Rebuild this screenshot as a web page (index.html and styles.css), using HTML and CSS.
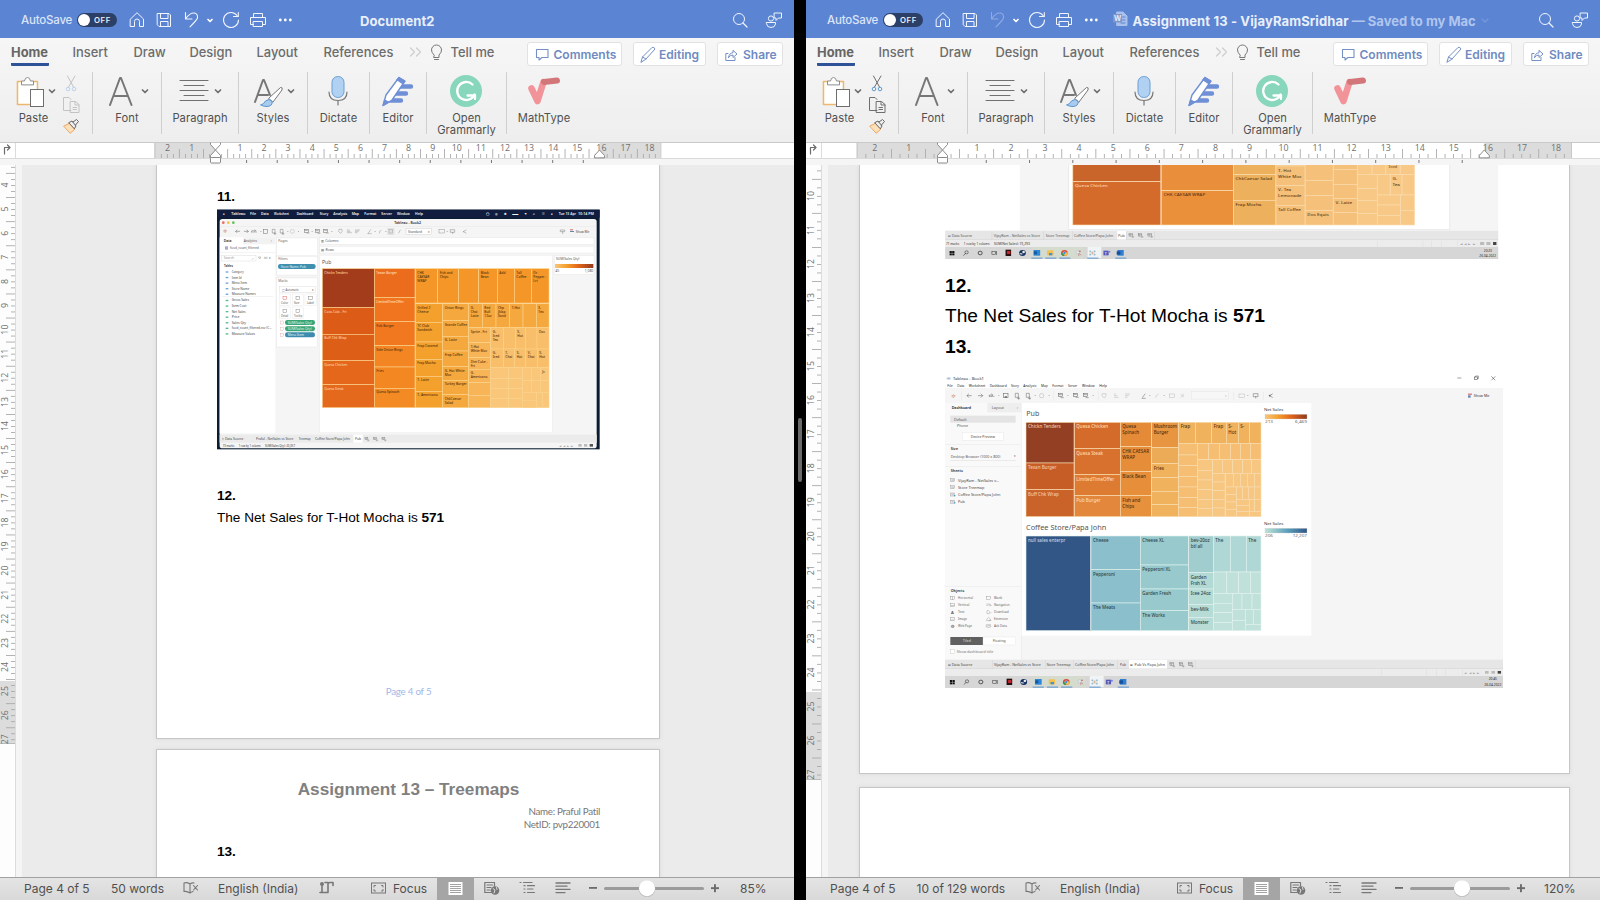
FILE: index.html
```html
<!DOCTYPE html>
<html lang="en">
<head>
<meta charset="utf-8">
<title>Word</title>
<link rel="stylesheet" href="styles.css">
</head>
<body>
<div class="desktop">
  <section class="window" id="left"></section>
  <div class="split"><span class="grip"></span></div>
  <section class="window" id="right"></section>
</div>
<script src="app.js"></script>
</body>
</html>
```

FILE: styles.css
```css
* { box-sizing: border-box; }
body { margin: 0; width: 1600px; height: 900px; overflow: hidden; background: #000; font-family: Inter, "Liberation Sans", sans-serif; }
svg { display: block; flex: none; overflow: visible; }
.desktop { display: flex; height: 900px; }
.window { width: 794px; height: 900px; display: flex; flex-direction: column; background: #f4f4f4; overflow: hidden; }
.split { width: 12px; display: flex; align-items: center; justify-content: center; background: #000; }
.grip { width: 4px; height: 64px; border-radius: 2px; background: #6a6a6a; }

.titlebar { height: 38px; flex: none; display: flex; align-items: center; background: #5b84d3; color: #e9effb; white-space: nowrap; }
.autosave { flex: none; width: 77px; padding-left: 21px; padding-top: 2px; font-size: 11.5px; font-weight: 500; letter-spacing: -.2px; color: #dbe5f8; }
.toggle { flex: none; width: 40px; height: 14px; margin-top: 2px; border-radius: 7px; background: #2c3f66; display: flex; align-items: center; gap: 4px; padding-left: 1px; font-size: 7.8px; font-weight: 600; letter-spacing: .6px; }
.knob { width: 12px; height: 12px; border-radius: 50%; background: #fff; }
.doc-title { flex: none; padding-top: 3px; font-size: 13px; font-weight: 700; display: flex; align-items: center; }
.left-title { width: 431px; padding-left: 58px; letter-spacing: .1px; }
.right-title { width: 411px; padding-left: 4.5px; }
.name { letter-spacing: .13px; }
.saved { color: #b1c6ee; font-weight: 700; white-space: pre; }
.title-gap { width: 5px; flex: none; }

.ribbon { height: 105px; flex: none; background: linear-gradient(#f6f6f6, #eeeeee); border-bottom: 1px solid #c9c9c9; }
.tabs { height: 34px; display: flex; font-size: 12.9px; font-weight: 500; color: #6c6c6c; white-space: nowrap; padding-left: 11px; }
.tab { flex: none; height: 28px; padding-top: 6.5px; line-height: 16px; }
.tab.active { font-weight: 700; border-bottom: 3px solid #2f5299; border-radius: 0 0 1px 1px; color: #666; }
.action { flex: none; height: 24px; margin-top: 4px; padding-top: 1px; border: 1px solid #e2e2e2; border-radius: 3px; background: #fff; color: #6f8bbf; display: flex; align-items: center; font-size: 12px; font-weight: 600; }
.groups { display: flex; height: 70px; }
.group { display: flex; border-right: 1px solid #cfcfcf; height: 62px; }
.group.last { border: 0; }
.stack { width: 100%; }
.label { font-size: 11.2px; line-height: 12px; color: #505050; text-align: center; margin-top: -.5px; letter-spacing: .05px; }
.label.paste { width: 67px; }

.hruler { height: 16px; flex: none; background: #fff; display: flex; border-bottom: 1px solid #dadada; }
.below-ruler { height: 6px; flex: none; background: #f5f5f5; display: flex; }
.body { flex: 1; min-height: 0; display: flex; overflow: hidden; }
.vruler { width: 16px; flex: none; background: #fdfdfd; border-right: 1px solid #dcdcdc; }
.gutter { width: 6px; flex: none; background: #f5f5f5; }
.canvas { flex: 1; background: #ebebeb; overflow: hidden; }
.page { background: #fff; border: 1px solid #c6c6c6; box-shadow: 0 0 4px #d8d8d8; }
.page.clipped { border-top: 0; }
.left-doc .page { width: 504px; margin-left: 134px; }
.left-doc .first { height: 574px; padding: 22px 59px 0 60px; }
.left-doc .second { height: 140px; margin-top: 10px; padding: 27px 59px 0 60px; }
.right-doc .page { width: 711px; margin-left: 31px; }
.right-doc .first { height: 609px; padding: 0 0 0 85px; }
.right-doc .second { height: 120px; margin-top: 13px; }
.line { font-family: "Liberation Sans", Arial, sans-serif; color: #000; white-space: nowrap; }
.left-doc .line { font-size: 13.6px; line-height: 20px; letter-spacing: 0; }
.right-doc .line { font-size: 19.2px; line-height: 30px; letter-spacing: -.02px; }
.footer { font-family: Lato, sans-serif; font-size: 9.8px; line-height: 20px; text-align: center; color: #a3b8e6; margin-top: 153px; letter-spacing: -.25px; }
.doc-head { font-family: "Liberation Sans", Arial, sans-serif; font-weight: 700; font-size: 17.2px; line-height: 24px; text-align: center; color: #808080; white-space: nowrap; }
.byline { font-family: Lato, sans-serif; font-size: 9.8px; line-height: 13px; text-align: right; color: #777; margin: 4px 0 11px; letter-spacing: -.3px; }

.status { height: 23px; flex: none; border-top: 1px solid #a1a1a1; background: linear-gradient(#e4e4e4, #d9d9d9); display: flex; font-size: 12px; line-height: 22px; color: #505050; white-space: nowrap; }
```

FILE: app.js
```
const R = (x, y, w, h, f, extra = '') => `<rect x="${x}" y="${y}" width="${w}" height="${h}" fill="${f}" ${extra}/>`;
const T = (x, y, s, text, w, f = '#555', extra = '') =>
  `<text x="${x}" y="${y}" font-size="${s}" fill="${f}" ${w ? `textLength="${w}" lengthAdjust="spacingAndGlyphs"` : ''} ${extra}>${text}</text>`;
const P = (d, s = '#6e6e6e', w = 1, f = 'none', extra = '') =>
  `<path d="${d}" stroke="${s}" stroke-width="${w}" fill="${f}" stroke-linejoin="round" stroke-linecap="round" ${extra}/>`;
const svg = (x, y, w, h, inner, extra = '') => `<svg width="${w}" height="${h}" viewBox="${x} ${y} ${w} ${h}" ${extra}>${inner}</svg>`;

/* ---------- title bar ---------- */
function titlebar(right) {
  const c = '#f1f5fd';
  const undo = right ? '#8fabe2' : c;
  const icons = svg(117, 0, 185, 38,
    P('M130.5 19L137 12.7L143.5 19V26.5H139.5V21.5Q139.5 19 137 19Q134.5 19 134.5 21.5V26.5H130.5Z', c) +
    P('M157.5 13.5H169L170.5 15V26.5H159L157.5 25ZM160.5 13.5V18.5H168V13.5M160.5 26.5V21.5H168V26.5', c) +
    P('M185.5 12.5V19H192M185.8 18.5Q190 12.5 194.5 13Q198 14 197.5 18Q197 20 190 26.8', undo, 1.1) +
    P('M208 19.5L210 21.5L212 19.5', '#fff', 1.7) +
    P('M237 15.5A7.5 7.5 0 1 0 238.5 20M238.3 12.5V16.5H233.5', c, 1.1) +
    P('M253.5 17.5V13.5H262.5V17.5M253.5 24.5H250.5V17.5H265.5V24.5H262.5M253.5 21.5H262.5V26.5H253.5Z', c) +
    [280.3, 285.3, 290.3].map(x => `<circle cx="${x}" cy="20" r="1.4" fill="#fff"/>`).join(''));
  const wordIcon = svg(313, 12, 15, 16, P('M317 13H323L327 17V26.5H317Z', '#a9c0ec', 1, '#a9c0ec') + P('M322.500 18H325M322.500 21H325M321 24H325', '#5b84d3') + R(313, 15, 9, 8.5, '#7f96c8') + T(314, 22, 7, 'W', 0, '#e2eafa', 'font-weight="700"'));
  const title = right
    ? `<div class="title-gap"></div>${wordIcon}<div class="doc-title right-title"><span class="name">Assignment 13 - VijayRamSridhar</span><span class="saved"> — Saved to my Mac</span>${svg(0, 0, 18, 6, P('M6 1L9 4L12 1', '#7697db', 1.3))}</div>`
    : `<div class="doc-title left-title">Document2</div>`;
  const tail = svg(733, 0, 61, 38,
    `<circle cx="739" cy="19" r="5.5" fill="none" stroke="${c}"/>` + P('M743 23L747 27', c, 1.2) +
    `<circle cx="771" cy="18.5" r="2.6" fill="none" stroke="${c}"/>` +
    P('M766.5 22.5H775.5V24Q775 27.5 771 27.5Q767 27.5 766.5 24ZM774.5 13H781.5V18H778.5L776 20.5V18H774.5Z', c));
  return `<div class="titlebar"><div class="autosave">AutoSave</div><div class="toggle"><span class="knob"></span>OFF</div>${icons}${title}${tail}</div>`;
}

/* ---------- ribbon ---------- */
function ribbon(right) {
  const tabs = [['Home', 37.5, 24], ['Insert', 35, 26], ['Draw', 31, 25], ['Design', 42, 25], ['Layout', 41, 26], ['References', 70, 16]]
    .map(([t, w, gap], i) => `<div class="tab ${i ? '' : 'active'}" style="width:${w}px;margin-right:${gap}px">${t}</div>`).join('');
  const bulb = svg(409.5, 38, 41, 28, P('M410 48L414 52L410 56M416 48L420 52L416 56', '#cdcdcd', 1.2) +
    P('M433.5 55Q431 52.5 431 50A5 5 0 0 1 441 50Q441 52.5 438.5 55V57.5H433.5ZM434 59.5H438', '#777'));
  const b = '#7590c4';
  const comments = svg(0, 0, 13, 13, P('M.5 1.5H12V9.5H6L3 12V9.5H.5Z', b, 1.1));
  const editing = svg(0, 0, 16, 17, P('M1 16L2.5 11L12 1.5Q14 .5 15 3L6 13ZM2.5 11L6 13', b));
  const share = svg(0, 0, 13, 12, P('M3 4.5H.8V11.5H10V8.5M3.5 8.5Q4 4 8 3.8V1.3L12 5L8 8.5V6Q5 6 3.5 8.5Z', b));
  const chev = x => P(`M${x - 2.5} 90L${x} 92.5L${x + 2.5} 90`, '#6e6e6e', 1.7);
  const group = (x, w, icon, label) => `<div class="group" style="width:${w}px"><div class="stack">${svg(x, 72, w - 1, 40, icon)}<div class="label">${label}</div></div></div>`;
  const mute = right ? '#6e6e6e' : '#c3c3c3';
  const muteBlue = right ? '#5d9ad3' : '#b9d4ee';
  const paste = P('M22 81.5H17.5V104.5H30', '#edb672', 1.6, '#fdeec9') + R(18.5, 82.5, 18, 21, '#fff') + P('M33 81.5H37.5V89', '#edb672', 1.4) +
    P('M21.5 84.5V81H24.5Q25 77.5 27.5 77.5Q30 77.5 30.5 81H33.5V84.5Z', '#8d8d8d', 1, '#fff') +
    R(30.5, 89.5, 13, 17, '#fff', 'stroke="#6e6e6e"') + chev(52);
  const tools = P('M67.5 76L73.5 87M75 76L68.5 87', mute) + `<circle cx="68" cy="89" r="1.8" fill="none" stroke="${muteBlue}"/><circle cx="74" cy="89" r="1.8" fill="none" stroke="${muteBlue}"/>` +
    P('M71 110.5H63.5V97.5H69L71 99.5', mute) + P('M70.5 101.5H75.5L79 104.5V112.5H70.5ZM75 101.5V105H79M73 107.5H76.5M73 109.5H76.5', mute) +
    P('M64 126L70 123L75 129L70.5 133Z', '#eba761', 1, '#fde0b8') + P('M69 122.5L72 121L76 126L74.5 128.5ZM73 122L76.5 119.5L78.5 121.5L75.5 125', '#666', 1, '#eee');
  const font = P('M110 105L120 78H121L131.5 105M113.5 96H128', '#767676', 2) + chev(145);
  const para = P('M180 80.5H208M184 85.5H204M180 90.5H208M184 95.5H204M180 100.5H208', '#707070', 1.1, 'none', 'stroke-linecap="butt"') + chev(218);
  const styles = P('M255 102L263 80H264L270 95M258 95H268', '#767676', 2) + P('M269 98L280.5 87.5Q283 87 282 90L273 102Z', '#777', 1, '#fff') + P('M261 105Q264 104 265.5 101Q269 98 272 101Q273 106 267 106.5Q263 106.5 261 105Z', '#5b93cf', 1, '#a9ccee') + chev(291);
  const mic = R(332, 76.5, 12, 21, '#b0d1f1', 'rx="5.8" stroke="#6b9fd6"') + P('M329 92Q329 100.5 338 100.5Q347 100.5 347 92M338 101V105', '#777', 1.2);
  const editor = P('M400 86.5H411M396 93.500H406M390 100.500H401', '#6f8fd6', 4.4) + P('M383 105.5L386 95L399 77.500L405 81L392 100Z', '#6f8fd6', 1.4, '#fff') + P('M399 77.5L405 81L403 84L397 80Z', '#6f8fd6', 1, '#6f8fd6') + P('M383 105.5L384.5 100L389 102Z', '#6f8fd6', 1, '#6f8fd6');
  const gram = '<circle cx="466" cy="91" r="16" fill="#88d6bc"/>' + P('M472.5 84.5A9 9 0 1 0 474.5 94.5M474.5 95.5H467.5M475 95V99', '#fff', 2.3, 'none', 'stroke-linecap="butt"');
  const math = P('M531.5 88.5L537.5 101L543.5 82', '#f19398', 6.5) + P('M544 82L557 80.5', '#d27679', 6);
  return `<div class="ribbon"><div class="tabs">${tabs}${bulb}<div class="tab" style="width:76.5px">Tell me</div>
    <div class="action" style="width:95px;padding-left:7.5px;gap:5px;margin-right:11px">${comments}Comments</div>
    <div class="action" style="width:73px;padding-left:6px;gap:3px;margin-right:11px">${editing}Editing</div>
    <div class="action" style="width:66px;padding-left:7px;gap:5px">${share}Share</div></div>
    <div class="groups"><div class="group" style="width:93px"><div style="width:60px">${svg(0, 72, 60, 40, paste)}<div class="label paste">Paste</div></div>${svg(60, 72, 32, 62, tools)}</div>
    ${group(93, 69, font, 'Font')}${group(162, 77, para, 'Paragraph')}${group(239, 69, styles, 'Styles')}${group(308, 62, mic, 'Dictate')}${group(370, 57, editor, 'Editor')}${group(427, 80, gram, 'Open<br>Grammarly')}
    <div class="group last" style="width:74px"><div class="stack">${svg(507, 72, 73, 40, math)}<div class="label">MathType</div></div></div></div></div>`;
}

/* ---------- rulers ---------- */
function hruler(o) {
  let s = R(o.start, 143, o.zero - o.start, 15, '#dcdcdc') + R(o.right, 143, o.end - o.right, 15, '#dcdcdc') + R(15, 143, 1, 15, '#dcdcdc') +
    P('M4.5 154V147.5H9.5M7.5 145L10 147.5L7.5 150', '#6b6b6b', 1.2) + R(o.start, 143, .8, 15, '#bbb') + R(o.end, 143, .8, 15, '#bbb');
  for (let q = -10; q < 76; q++) {
    const x = o.zero + q * o.cm / 4;
    if (x < o.start + 2 || x > o.end - 2) continue;
    const half = Math.abs(q % 4) === 2;
    if (q) s += R((x - .4).toFixed(1), half ? 149 : 154, .9, half ? 9 : 4, '#ababab');
    if (q % 4 === 0 && q) s += T((x + .3).toFixed(1), 151, 8.8, Math.abs(q / 4), 0, '#6f6f6f', 'text-anchor="middle"');
  }
  s += P(`M${o.zero - 5} 143V144.5L${o.zero} 150L${o.zero + 5} 144.5V143M${o.zero - 5} 157.5V155.5L${o.zero} 150L${o.zero + 5} 155.5V157.5Z`, '#8b8b8b', 1, '#fff') +
    R(o.zero - 5, 157.5, 10, 5.5, '#fff', 'stroke="#8b8b8b" rx="1"') +
    P(`M${o.right - 5} 157.5V155.5L${o.right} 150L${o.right + 5} 155.5V157.5Z`, '#8b8b8b', 1, '#fff');
  for (let k = 1; k < 13 && k * o.cm * 1.27 < o.right - o.zero - 5; k++) s += R(o.zero + k * o.cm * 1.27, 160, 1, 3, '#777');
  return `<div class="hruler">${svg(0, 143, 794, 15, s, 'font-family="Open Sans" style="position:relative;z-index:1"')}</div><div class="below-ruler"></div>`;
}
function vruler(o) {
  let s = R(0, o.from, 15, o.to - o.from, '#dcdcdc') + R(0, o.to, 15, 1, '#bbb');
  for (let q = 0; q < 112; q++) {
    const y = o.zero + q * o.cm / 4;
    if (y < 166 || y > o.to - 1) continue;
    const half = q % 4 === 2;
    s += R(half ? 6 : 11, y.toFixed(1), half ? 9 : 4, .9, '#ababab');
    if (q % 4 === 0) s += T(0, 0, 8.8, q / 4, 0, '#6f6f6f', `text-anchor="middle" transform="translate(8 ${y.toFixed(1)}) rotate(-90)"`);
  }
  return `<div class="vruler">${svg(0, 165, 15, 712, s, 'font-family="Open Sans"')}</div>`;
}

/* ---------- status bar ---------- */
function status(o) {
  const g = '#777';
  const word = (w, t) => `<div style="width:${w}px">${t}</div>`;
  const book = svg(0, 878, 15, 22, P('M7 884Q4 882 1 883V891.5Q4 891 7 893Q8 892 10 891.5M7 884V893M7 884Q9 882.5 11 883M10.5 885.5L14.5 890M14.5 885.5L10.5 890', g, 1.1));
  const track = svg(0, 878, 15, 22, '<circle cx="3" cy="884" r="2" fill="#777"/>' + P('M3 886V892.5H9V884Q9 882.5 11 882.5H14V885.5M1 892.5H6M9 882.5H6', g, 1.6));
  const focus = svg(0, 878, 15, 22, R(.5, 883, 14, 10, 'none', `stroke="${g}"`) + P('M3 887V885.5H4.5M10.5 885.5H12V887M12 889.5V891H10.5M4.5 891H3V889.5', g));
  const lay = svg(0, 878, 37, 22, R(0, 878, 37, 22, '#a5a5a5') + R(11.5, 882, 14, 13, '#fff') + [884, 886, 888, 890, 892].map(y => R(13, y, 11, .9, '#999')).join(''));
  const web = svg(0, 878, 16, 22, P('M10.5 886V882.5H.8V892.5H7M3 885H8.5M3 887.5H7M3 890H6', g, 1.2) + '<circle cx="11" cy="890.5" r="4.3" fill="#777"/>' + P('M9 888.5L11 890L10 893M12.5 887.5L13 889.5', '#ddd', 1));
  const out = svg(0, 878, 15, 22, P('M0 882.5H1M3.5 882.5H12M4 885.7H5M7.5 885.7H14.5M4 889H5M7.5 889H13M4 892.5H5M7.5 892.5H14.5', g, 1.2, 'none', 'stroke-linecap="butt"'));
  const draft = svg(0, 878, 14, 22, P('M0 883H14M0 886.2H11M0 889.4H14M0 892.6H9', g, 1.3, 'none', 'stroke-linecap="butt"'));
  const zoom = svg(589, 878, 151, 22, R(589, 887, 8, 1.8, '#6b6b6b') + R(604, 887, 100, 3, '#9b9b9b', 'rx="1.5"') +
    `<circle cx="${o.knob}" cy="888.8" r="8.3" fill="#bbb"/><circle cx="${o.knob}" cy="888.2" r="8" fill="#fff"/>` + R(711, 887.2, 8, 1.9, '#6b6b6b') + R(714, 884.2, 1.9, 8, '#6b6b6b'));
  const sp = w => `<div style="width:${w}px;flex:none"></div>`;
  return `<div class="status">${sp(24)}${word(o.w1, 'Page 4 of 5')}${word(o.w2, o.words)}${book}${sp(20)}${word(o.w3, 'English (India)')}${o.track ? track : ''}${o.track ? sp(37) : ''}${focus}${sp(7)}${word(44, 'Focus')}${lay}${sp(10)}${web}${sp(20)}${out}${sp(21)}${draft}${sp(19)}${zoom}<div style="margin-left:${o.zx}px">${o.pct}</div></div>`;
}

/* ---------- treemap cells: [x0, y0, x1, y1, fill, label lines, label colour] ---------- */
const cells = (list, gap, ink, size, step) => list.map(([a, b, c, d, f, t, tc]) =>
  R(a - 1, b - 1, c - a + 2, d - b + 2, f, `stroke="${gap}" stroke-width="1.8"`) +
  (t ? t.split('|').map((l, i) => T(a + 5, b + size + 4 + i * step, size, l, 0, tc || ink, 'font-weight="500"')).join('') : '')).join('');
const column = (x0, x1, ys, f, labels = [], tc) => ys.slice(0, -1).map((y, i) => [x0, y, x1, ys[i + 1] - 2, Array.isArray(f) ? f[i] : f, labels[i], tc]);
const row = (y0, y1, xs, f, labels = []) => xs.slice(0, -1).map((x, i) => [x, y0, xs[i + 1] - 2, y1, f, labels[i]]);

/* small worksheet glyph with a plus, used on the sheet tabs */
const sheetIcon = (x, y, s = 1) => `<g transform="translate(${x} ${y}) scale(${s})">` + R(0, 0, 10, 8, 'none', 'stroke="#777" stroke-width="1.3"') + P('M0 3H10M4 3V8M9 10.500H14M11.500 8V13', '#777', 1.3) + '</g>';

function macShot() {
  const K = 570;
  let s = R(21, 14, 1148, 719, '#0b1c33') + R(21, 14, 1148, 24, '#101d3e') + R(29, 42, 1131, 688, '#f5f5f5', 'rx="8"');
  [['●', 38], ['Tableau', 64, 42], ['File', 120, 18], ['Data', 153, 23], ['Worksheet', 192, 45], ['Dashboard', 260, 50], ['Story', 329, 26], ['Analysis', 370, 42], ['Map', 425, 22], ['Format', 463, 36], ['Server', 514, 32], ['Window', 561, 38], ['Help', 615, 24], ['◯', 828], ['◎', 855], ['✱', 883], ['▬', 907, 18], ['▼', 942], ['⌕', 970], ['☰', 996], ['●', 1022], ['Tue 13 Apr', 1046, 52], ['10:14 PM', 1104, 48]]
    .forEach(([t, x, w]) => s += T(x, 29, 10, t, w, '#f2f2f2', 'font-weight="600"'));
  s += '<circle cx="40" cy="53" r="4" fill="#ed6a5e"/><circle cx="55" cy="53" r="4" fill="#f5bf4f"/><circle cx="70" cy="53" r="4" fill="#61c554"/>';
  s += T(553, 56, 10, 'Tableau - Book2', 80, '#333', 'font-weight="600"');
  s += R(29, 65, 1131, .8, '#ddd');
  s += T(40, 84, 14, '✲', 0, '#d09080');
  const k1 = '#6a6a6a';
  s += P('M89 79H77L81 75M77 79L81 83M103 79H115L111 75M115 79L111 83', k1, 1.6) + P('M125 81V77H137L134 74M137 77L134 80M125 81H140', k1, 1.3) +
    R(160, 73, 12, 12, 'none', `stroke="${k1}" stroke-width="1.5"`) + P('M188 73H195V84H188ZM192 86H198M195 83V89M212 73H219V84H212ZM216 86H222M219 83V89', k1, 1.3) + '<circle cx="247" cy="79" r="6" fill="none" stroke="#aaa" stroke-width="1.3"/>' +
    [[283, 73], [316, 74], [341, 73]].map(([x, y]) => R(x, y, 12, 9, 'none', `stroke="${k1}" stroke-width="1.5"`) + P(`M${x + 3} ${y + 3}H${x + 9}M${x + 8} ${y + 11}H${x + 14}`, k1, 1.5)).join('') +
    P('M388 73H396V80L392 85L387 81ZM412 75H417M412 79H420M412 83H424M436 75H449M436 79H445M436 83H441M474 86L482 74M474 86H484M508 84Q507 77 513 76M566 84L571 75', '#8a8a8a', 1.4) +
    R(532, 69, 21, 21, '#e2e2e2') + R(537, 74, 11, 10, 'none', 'stroke="#888"') + R(687, 74, 16, 10, 'none', 'stroke="#888" stroke-width="1.300"') + P('M722 74H734V82H722ZM728 82V86M760 80L768 75M760 80L768 84M1052 75H1064V80H1052ZM1058 80V86', '#777', 1.4) +
    [151, 232, 264, 305, 364, 494, 526, 710].map(x => R(x, 78, 3, 2, '#888')).join('');
  s += R(588, 70, 77, 19, '#fff', 'stroke="#bbb"') + T(594, 83, 9, 'Standard', 42) + T(655, 83, 8, '▾');
  s += R(1080, 73, 9, 3, '#c66') + R(1080, 78, 12, 3, '#68a') + T(1097, 83, 9, 'Show Me', 41, '#444');
  s += R(29, 97, 167, 588, '#fff') + R(100, 97, 96, 21, '#f2f2f2') + T(41, 110, 10, 'Data', 24, '#333', 'font-weight="600"') + T(101, 110, 10, 'Analytics', 40) + T(182, 110, 11, '‹');
  s += T(60, 132, 9, 'food_count_filtered', 86) + R(45, 124, 9, 10, '#aac') + R(29, 142, 167, 1, '#ddd') + R(34, 152, 104, 16, '#fff', 'stroke="#ccc"') + T(41, 163, 9, 'Search', 31, '#999') + P('M130 160L127 163M146 156H153L150 161ZM163 157H171M163 160H171', '#888', 1.3) + T(178, 163, 8, '▾') + T(42, 185, 10, 'Tables', 27, '#333', 'font-weight="600"');
  ['Category', 'Item Id', 'Menu Item', 'Store Name', 'Measure Names', 'Gross Sales', 'Item Cost', 'Net Sales', 'Price', 'Sales Qty', 'food_count_filtered.csv (C...', 'Measure Values'].forEach((t, i) => {
    const y = 204 + i * 16.7 + (i > 4 ? 2 : 0);
    s += R(47, y - 5, 8, 4, i < 5 ? '#6aa5d8' : '#57b98c') + T(65, y, 9.5, t, [36, 30, 46, 53, 72, 52, 44, 42, 23, 43, 120, 70][i], '#444');
  });
  s += R(34, 275, 155, 1, '#ddd');
  const card = (y, h, t) => R(200, y, 122, h, '#fff', 'stroke="#ddd"') + T(205, y + 12, 9.5, t, 28, '#666');
  s += card(99, 53, 'Pages') + card(154, 56, 'Filters') + card(219, 207, 'Marks');
  s += R(204, 177, 113, 15, '#3f8fae', 'rx="7"') + T(212, 188, 9, 'Store Name: Pub', 76, '#e7f2f6');
  s += R(208, 245, 108, 17, '#fff', 'stroke="#ccc"') + T(216, 258, 9, '▢ Automatic', 50) + T(305, 257, 8, '▾');
  [[208, 267, 'Color'], [247, 267, 'Size'], [285, 267, 'Label'], [208, 306, 'Detail'], [247, 306, 'Tooltip']].forEach(([x, y, t], i) => s += R(x, y, 34, 35, '#fff', 'stroke="#ddd"') + R(x + 11, y + 8, 11, 8, 'none', `stroke="${i ? '#888' : '#d66'}" stroke-width="1.5"`) + T(x + 5, y + 29, 8.5, t, i > 3 ? 25 : i === 1 ? 16 : 22));
  [['#37a574', 'SUM(Sales Qty)'], ['#37a574', 'SUM(Sales Qty)'], ['#3b8cae', 'Menu Item']].forEach(([f, t], i) => s += R(211, 348 + i * 19, 10, 9, 'none', 'stroke="#c99"') + R(225, 345 + i * 18.5, 90, 15, f, 'rx="7"') + T(233, 356 + i * 18.5, 9, t, i > 1 ? 49 : 72, '#e8f5ee'));
  s += R(329, 98, 823, 20, '#fff', 'stroke="#ddd"') + R(329, 124, 823, 20, '#fff', 'stroke="#ddd"') + T(334, 112, 9.5, '▥ Columns', 52) + T(334, 138, 9.5, '▤ Rows', 38);
  s += R(329, 151, 698, 532, '#fff', 'stroke="#e4e4e4"') + T(336, 176, 16, 'Pub', 28, '#555');
  s += R(1033, 152, 119, 56, '#fff', 'stroke="#e0e0e0"') + T(1038, 166, 9, 'SUM(Sales Qty)', 70) + R(1035, 177, 115, 12, 'url(#og)') + T(1036, 202, 9, '45', 12) + T(1124, 202, 9, '1,080', 26);
  const A = '#f4a02d', B = '#f5a83d', C = '#f7b558', D = '#f8be69', E = '#f9c67a';
  const m = [...column(338, 492, [192, 309, 389, 468, 540, 609], ['#a33c1b', '#db5b17', '#dd5e17', '#e4671b', '#e5691c'], ['Chickn Tenders', 'Coca-Cola - Frt', 'Buff Chk Wrap', 'Quesa Chicken', 'Quesa Steak'], '#ffd0a4'),
    ...column(494, 614, [192, 279, 351], ['#eb6c1c', '#f1751e'], ['Texan Burger', 'LimitedTimeOffer'], '#ffe0b8'),
    ...column(494, 614, [351, 423, 487, 551, 609], ['#f2781f', '#f38522', '#f38823', '#f38a24'], ['Pub Burger', 'Side Onion Rings', 'Fries', 'Quesa Spinach'])];
  const k = a => a.map(([x, y, x1, ...r]) => [x + K, y, x1 + K, ...r]);
  m.push(...k([...row(192, 293, [47, 114, 177, 237, 293, 344, 395, 448], '#f59728', ['CHK|CAESAR|WRAP', 'Fish and|Chips', '', 'Black|Bean', 'Add', 'Tall|Coffee', 'Dr.|Pepper -|Lrt']),
    ...column(47, 127, [297, 353, 412, 464, 515, 560, 609], A, ['Grilled 2|Cheese', 'TC Club|Sandwich', 'Frap Caramel', 'Frap Mocha', 'T- Latte', 'T- Americano']),
    ...column(129, 205, [297, 348, 395, 439, 486, 527, 570, 609], B, ['Onion Rings', 'Grande Coffee', 'G- Latte', 'Frap Coffee', 'G- Hot White|Moc', 'Turkey Burger', 'ChkCaesar|Salad']),
    ...row(297, 367, [207, 248, 289, 330, 370, 410, 448], B, ['G-|Chai|Latte', 'Red|Bull|12oz', 'Chp|Jklap|Sand', 'T-Hot', '', 'S-|Tea']),
    ...column(207, 271, [369, 414, 459, 494, 534, 572, 609], C, ['Sprite - Frt', 'T-Hot|White Moc', 'Diet Coke -|Frt', 'G-|Americano']),
    ...row(369, 431, [273, 311, 347, 377, 412, 448], D, ['G-|Iced|Tea', '', 'S-|Hot', '', 'Dos']),
    ...row(433, 487, [273, 311, 345, 378, 413, 448], D, ['G-|Iced', 'T-|Chai', 'S-|Hot', 'V-|Chai', 'S-|Hot']),
    ...column(273, 325, [489, 522, 552, 581, 609], E), ...column(327, 367, [489, 522, 552, 581, 609], E),
    ...row(489, 525, [369, 395, 422, 448], E, ['', '', 'Jr.']), ...row(527, 561, [369, 395, 422, 448], E), ...row(563, 607, [369, 410, 428, 448], E), ...row(587, 607, [369, 410], E)]));
  s += cells(m, '#fbd28a', '#54300c', 9.8, 12);
  s += R(29, 689, 1131, 24, '#ebebeb') + R(430, 689, 28, 24, '#fff');
  [['▯ Data Source', 36, 64], ['Praful - NetSales vs Store', 138, 112], ['Treemap', 266, 36], ['Coffee Store/Papa John', 315, 105], ['Pub', 435, 18]].forEach(([t, x, w]) => s += T(x, 706, 9.5, t, w, '#444'));
  s += [465, 491, 516].map(x => sheetIcon(x, 697, .85)).join('');
  [['73 marks', 38, 35], ['1 row by 1 column', 86, 66], ['SUM(Sales Qty): 20,057', 165, 90]].forEach(([t, x, w]) => s += T(x, 725, 9, t, w, '#333'));
  s += T(1047, 725, 8, '◂ ◂ ▸ ▸', 45, '#999') + R(1105, 717, 10, 8, '#bbb') + R(1122, 717, 10, 8, '#bbb') + R(1139, 717, 10, 8, '#555');
  return svg(217, 210, 382, 239, `<g transform="translate(210 205) scale(.33333)">${s}</g>`, 'font-family="Noto Sans"');
}

const defs = '<defs><linearGradient id="og"><stop stop-color="#f9c67a"/><stop offset=".3" stop-color="#f4a02d"/><stop offset=".6" stop-color="#e4671b"/><stop offset="1" stop-color="#923a1c"/></linearGradient><linearGradient id="bg"><stop stop-color="#bfe4d8"/><stop offset=".55" stop-color="#5a9dbb"/><stop offset="1" stop-color="#325685"/></linearGradient></defs>';

/* Windows taskbar icons, evenly spaced */
function taskbar(x, y) {
  const L = i => x + i * 37.8;
  return R(L(6) - 6, y - 18, 140, 33, '#d6dbcf') + R(L(10) - 5, y - 18, 37, 33, '#f1f4f5') +
    R(L(0), y - 6, 6, 6, '#111') + R(L(0) + 7, y - 6, 6, 6, '#111') + R(L(0), y + 1, 6, 6, '#111') + R(L(0) + 7, y + 1, 6, 6, '#111') +
    `<circle cx="${L(1) + 8}" cy="${y - 2}" r="4.5" fill="none" stroke="#222" stroke-width="1.5"/>` + P(`M${L(1) + 5} ${y + 2}L${L(1)} ${y + 7}`, '#222', 1.5) +
    `<circle cx="${L(2) + 7}" cy="${y}" r="5.5" fill="none" stroke="#222" stroke-width="2"/>` + R(L(3) + 1, y - 4, 9, 8, 'none', 'stroke="#333" stroke-width="1.5"') + R(L(3) + 12, y - 6, 1.5, 12, '#333') +
    R(L(4), y - 10, 15, 19, '#2a0f0e') + R(L(4) + 4, y - 6, 9, 9, '#c1272d') + `<circle cx="${L(5) + 8}" cy="${y}" r="9" fill="#14315f"/><circle cx="${L(5) + 11}" cy="${y - 3}" r="3.5" fill="#eee"/>` + P(`M${L(5) + 2} ${y + 2}L${L(5) + 7} ${y + 3}`, '#fff', 3) +
    R(L(6), y - 9, 18, 17, '#2f85d6') + R(L(6) + 1, y - 5, 8, 9, '#0e5aa7') + R(L(7) - 1, y - 8, 17, 15, '#f2c14f') + R(L(7) + 4, y, 9, 7, '#4b8fcc') +
    `<circle cx="${L(8) + 8}" cy="${y}" r="9" fill="#d64a3b"/><path d="M${L(8) + 8} ${y}L${L(8) - 1} ${y}A9 9 0 0 0 ${L(8) + 8} ${y + 9}Z" fill="#2b9c4b"/><path d="M${L(8) + 8} ${y + 9}A9 9 0 0 0 ${L(8) + 17} ${y - 2}L${L(8) + 8} ${y}Z" fill="#f3c332"/><circle cx="${L(8) + 8}" cy="${y}" r="4" fill="#3f7fe0" stroke="#fff"/>` +
    `<circle cx="${L(9) + 6}" cy="${y - 2}" r="5" fill="#dfe6ea" stroke="#aab"/><circle cx="${L(9) + 12}" cy="${y - 5}" r="2.5" fill="#c66"/>` + P(`M${L(9) + 9} ${y + 2}V${y + 8}M${L(9) + 12} ${y + 3}L${L(9) + 14} ${y + 6}`, '#b77', 2) +
    P(`M${L(10) + 8} ${y - 4}V${y + 4}M${L(10) + 4} ${y}H${L(10) + 12}`, '#d08a5a', 1.4) + P(`M${L(10) + 2} ${y - 7}V${y - 3}M${L(10)} ${y - 5}H${L(10) + 4}M${L(10) + 14} ${y - 7}V${y - 3}M${L(10) + 12} ${y - 5}H${L(10) + 16}M${L(10) + 2} ${y + 3}V${y + 7}M${L(10)} ${y + 5}H${L(10) + 4}M${L(10) + 14} ${y + 3}V${y + 7}M${L(10) + 12} ${y + 5}H${L(10) + 16}`, '#5c9bc4', 1.3) +
    R(L(11), y - 7, 14, 14, '#5058b8') + `<circle cx="${L(11) + 16}" cy="${y - 4}" r="3" fill="#7b83eb"/>` + T(L(11) + 3, y + 5, 12, 'T', 0, '#fff') +
    R(L(12), y - 9, 17, 17, '#2f7ed0') + R(L(12) - 2, y - 5, 10, 10, '#174f9c') + [6, 7, 8, 10, 12].map(i => R(L(i) - 6, y + 14, 30, 2.5, '#3f86cf')).join('');
}

function pubStrip() {
  let s = R(41, 0, 1495, 212, '#fff') + R(243, 0, 1293, 212, '#f5f5f5') + R(375, 0, 1030, 208, '#fff', 'stroke="#e5e5e5" stroke-width="2"');
  const a = '#edb05c', c = '#f5c07a', d = '#f8c886';
  s += cells([[387, -10, 623, 63, '#c9642a'], [387, 66, 623, 194, '#d56b2b', 'Quesa Chicken', '#ffd6b2'], [626, -10, 819, 90, '#e98e3a'], [626, 93, 819, 194, '#ea903b', 'CHK CAESAR WRAP'],
    ...column(821, 934, [-10, 45, 122, 196], a, ['', 'ChkCaesar Salad', 'Frap Mocha']), ...column(936, 1013, [-10, 19, 78, 137, 196], c, ['', 'T- Hot|White Moc', 'V- Tea|Lemonade', 'Tall Coffee']),
    ...column(1015, 1089, [-10, 62, 107, 153, 196], c, ['', '', '', 'Dos Equis']), ...column(1091, 1154, [-10, 29, 74, 116, 158, 196], c, ['', '', '', 'V- Latte']),
    ...column(1156, 1209, [-10, 45, 86, 122, 161, 196], d), ...row(-10, 43, [1156, 1196, 1233, 1272, 1311], d), ...row(45, 104, [1210, 1245, 1277, 1311], d, ['', 'G-|Tea']), ...column(1210, 1271, [106, 136, 167, 196], d), ...column(1273, 1309, [106, 152, 196], d)], '#fbdcae', '#5a3a18', 12.5, 18);
  s += T(1240, 25, 11, 'Iced', 23, '#5a3a18');
  s += R(41, 212, 1495, 29, '#e6e6e6') + R(506, 213, 24, 27, '#fff') + R(41, 240, 1495, 21, '#ececec') + R(41, 239, 1495, 1, '#ccc') + R(41, 261, 1495, 36, '#d6d6d6');
  [['⊟ Data Source', 48, 66], ['VijayRam - NetSales vs Store', 172, 125], ['Store Treemap', 313, 64], ['Coffee Store/Papa John', 389, 106], ['Pub', 508, 19]].forEach(([t, x, w]) => s += T(x, 230, 10.5, t, w, '#555'));
  s += [538, 563, 589].map(x => sheetIcon(x, 221, .9)).join('');
  s += [167, 307, 385, 530, 606].map(x => R(x, 213, 1, 27, '#ccc')).join('') + [1209, 1332, 1355, 1382, 1426].map(x => R(x, 241, 1, 20, '#d8d8d8')).join('');
  [['71 marks', 43, 36], ['1 row by 1 column', 91, 70], ['SUM(Net Sales): 73,293', 173, 97]].forEach(([t, x, w]) => s += T(x, 255, 9.5, t, w, '#333'));
  s += T(1432, 254, 8, '◂ ◂ ▸ ▸', 44, '#999') + R(1487, 246, 11, 9, '#bbb') + R(1504, 246, 11, 9, '#bbb') + R(1522, 246, 9, 9, '#444') + taskbar(53, 279) + T(1497, 275, 9, '20:23', 22, '#222') + T(1485, 290, 9, '26-04-2022', 45, '#222');
  return `<svg width="554" height="94" viewBox="945 165 554 94" style="overflow:hidden" font-family="Noto Sans"><g transform="translate(930 160) scale(.36995 .33333)">${s}</g></svg>`;
}

function dashShot() {
  const o = '#f5be72', e = '#f7c681', q = '#f0b25c';
  let s = R(30, 10, 1674, 944, '#fff') + R(30, 54, 1674, 846, '#f5f5f5') + T(34, 30, 12, '⁜', 14, '#7aa9cc') + T(54, 29, 12, 'Tableau - Book1', 93, '#333');
  s += P('M1568 24H1578', '#444', 1.5) + R(1619, 21, 8, 8, 'none', 'stroke="#333" stroke-width="1.5"') + P('M1622 20V18H1630V26H1628', '#333', 1.3) + P('M1670 20L1680 30M1680 20L1670 30', '#333', 1.5);
  [['File', 37, 16], ['Data', 67, 21], ['Worksheet', 101, 50], ['Dashboard', 164, 51], ['Story', 228, 24], ['Analysis', 265, 39], ['Map', 318, 20], ['Format', 352, 33], ['Server', 399, 28], ['Window', 441, 38], ['Help', 493, 23]].forEach(([t, x, w]) => s += T(x, 51, 11, t, w, '#222'));
  s += T(47, 83, 16, '✲', 14, '#d39a80') + R(79, 64, 1, 28, '#ddd');
  const k1 = '#5f5f5f', k2 = '#b5b5b5';
  s += P('M109 77H96L101 72M96 77L101 82M130 77H143L138 72M143 77L138 82', k1, 1.6) + P('M163 79V75H173L170 72M173 75L170 78M163 79H177', k1, 1.5) +
    R(206, 70, 13, 13, 'none', `stroke="${k1}" stroke-width="1.6"`) + R(209, 79, 7, 4, k1) + P('M242 70H250V82H242ZM247 85H254M251 81V88M275 70H283V82H275ZM280 85H287M284 81V88', k1, 1.5) +
    '<circle cx="320" cy="77" r="6.500" fill="none" stroke="#aaa" stroke-width="1.4"/>' +
    [[370, 71], [415, 70], [445, 71]].map(([x, y]) => R(x, y, 12, 9, 'none', `stroke="${k1}" stroke-width="1.6"`) + P(`M${x + 3} ${y + 3}H${x + 9}M${x + 8} ${y + 12}H${x + 15}`, k1, 1.6)).join('') +
    P('M503 71H513V78L508 84L502 79ZM538 72H542M538 77H546M538 82H550M571 72H584M571 77H580M571 82H576M662 82Q662 75 669 73M739 82L746 72M738 74L746 80', k2, 1.5) + P('M621 85H631M623 82L630 72', k1, 1.5) + R(704, 72, 14, 11, 'none', `stroke="${k2}" stroke-width="1.4"`) +
    R(912, 72, 16, 10, 'none', `stroke="${k2}" stroke-width="1.4"`) + P('M956 71H969V80H956ZM962 80V84', k1, 1.5) + P('M1004 77L1012 72M1004 77L1012 82', k1, 1.7) + '<circle cx="1004" cy="77" r="2.500" fill="#5f5f5f"/>' +
    [190, 299, 341, 397, 473, 643, 686, 937].map(x => R(x, 76, 3, 2, '#888')).join('');
  s += R(769, 65, 111, 22, '#f7f7f7', 'stroke="#ddd"') + T(869, 80, 9, '▾', 0, '#bbb') + R(895, 64, 1, 27, '#ddd') + R(985, 64, 1, 27, '#ddd') + R(355, 64, 1, 28, '#ddd') + R(489, 64, 1, 28, '#ddd');
  s += R(1599, 71, 12, 3, '#c55') + R(1599, 76, 8, 7, '#68b') + T(1616, 81, 10, 'Show Me', 47, '#333');
  s += R(30, 99, 229, 771, '#f9f9f9') + R(157, 99, 102, 28, '#eee') + R(258, 99, 1, 771, '#ddd') + T(50, 117, 11.5, 'Dashboard', 58, '#222', 'font-weight="600"') + T(170, 117, 11.5, 'Layout', 37) + T(245, 118, 12, '‹') +
    R(46, 137, 196, 21, '#e4e4e4') + T(57, 152, 11, 'Default', 38, '#555') + T(66, 171, 11, 'Phone', 33, '#555') + R(82, 187, 123, 24, '#fff', 'stroke="#ddd"') + T(107, 203, 11, 'Device Preview', 73, '#444') +
    R(30, 224, 228, 1, '#ddd') + R(30, 289, 228, 1, '#ddd') + R(30, 648, 228, 1, '#ddd') + T(47, 241, 11, 'Size', 22, '#333', 'font-weight="600"') + T(47, 263, 11, 'Desktop Browser (1000 x 800)', 149, '#555') + T(236, 262, 8, '▾') + R(46, 271, 197, 1, '#ccc') + T(47, 306, 11, 'Sheets', 37, '#333', 'font-weight="600"');
  [['VijayRam - NetSales v...', 123], ['Store Treemap', 79], ['Coffee Store/Papa John', 127], ['Pub', 20]].forEach(([t, w], i) => s += R(47, 326 + i * 21.5, 12, 9, 'none', 'stroke="#777"') + P(`M50 ${329 + i * 21.5}H56M50 ${332 + i * 21.5}H56`, '#777') + (i > 1 ? R(57, 332 + i * 21.5, 4, 4, '#3f9fc0') : '') + T(69, 335 + i * 21.8, 11.5, t, w, '#444'));
  s += T(47, 665, 11, 'Objects', 41, '#333', 'font-weight="600"');
  [['Horizontal', 45, 'Blank', 25], ['Vertical', 34, 'Navigation', 47], ['Text', 19, 'Download', 44], ['Image', 27, 'Extension', 42], ['Web Page', 42, 'Ask Data', 39]].forEach(([a, w, b, v], i) => {
    const y = 688 + i * 21;
    s += [R(47, y - 8, 12, 9, 'none', 'stroke="#777"') + R(52, y - 8, 1, 9, '#777'), R(47, y - 8, 12, 9, 'none', 'stroke="#777"') + R(47, y - 4, 12, 1, '#777'), T(48, y + 1, 12, 'A', 0, '#555', 'font-weight="700"'), R(47, y - 8, 12, 9, 'none', 'stroke="#777"') + P(`M48 ${y}L52 ${y - 4}L57 ${y}`, '#777'), `<circle cx="53" cy="${y - 3}" r="5" fill="#888"/>` + P(`M49 ${y - 3}H57M53 ${y - 7}V${y + 1}`, '#ddd')][i];
    s += [R(155, y - 8, 12, 9, 'none', 'stroke="#777"'), P(`M155 ${y - 7}H164V${y - 3}H168M155 ${y - 3}H160M166 ${y - 5}L168 ${y - 3}L166 ${y - 1}`, '#777'), P(`M163 ${y + 1}H156V${y - 8}H161L163 ${y - 6}M163 ${y - 2}H168`, '#777'), P(`M156 ${y - 4}L161 ${y - 9}L166 ${y - 4}V${y + 1}H156ZM162 ${y}H168`, '#777'), P(`M155 ${y - 8}H167V${y - 1}H163L161 ${y + 2}L159 ${y - 1}H155ZM158 ${y - 5}H164`, '#777')][i];
    s += T(69, y, 10, a, w, '#666') + T(177, y, 10, b, v, '#666');
  });
  s += R(46, 801, 98, 24, '#606060') + R(144, 801, 98, 24, '#fff', 'stroke="#ddd"') + T(83, 817, 11, 'Tiled', 25, '#ddd') + T(173, 817, 11, 'Floating', 39) + R(47, 839, 11, 11, '#fff', 'stroke="#bbb"') + T(65, 849, 11, 'Show dashboard title', 110, '#777');
  s += R(260, 99, 870, 698, '#fff') + R(1130, 99, 1, 698, '#eee') + T(274, 138, 22, 'Pub', 39, '#555') + T(273, 479, 22, 'Coffee Store/Papa John', 241, '#555');
  s += cells([...column(274, 416, [158, 280, 360, 441], ['#923f24', '#c65d27', '#c96329'], ['Chickn Tenders', 'Texan Burger', 'Buff Chk Wrap'], '#f8c8a6'),
    ...column(419, 555, [158, 237, 315, 378, 441], ['#d46b2b', '#d8702e', '#de7b33', '#e2873b'], ['Quesa Chicken', 'Quesa Steak', 'LimitedTimeOffer', 'Pub Burger'], '#ffdbb4'),
    ...column(557, 648, [158, 231, 306, 378, 441], ['#e58b37', '#e68d39', '#e68e3a', '#e7913d'], ['Quesa|Spinach', 'CHK CAESAR|WRAP', 'Black Bean', 'Fish and|Chips']),
    ...column(651, 730, [158, 234, 282, 324, 365, 405, 441], ['#e89541', '#ecab56', q, q, q, q], ['Mushroom|Burger', '', 'Fries']),
    ...row(158, 219, [732, 782, 831, 875, 911, 945, 979], q, ['Frap', '', 'Frap', 'S-|Hot', 'S-']),
    ...column(732, 787, [221, 256, 288, 320, 352, 384, 414, 441], o), ...row(221, 268, [789, 822, 855, 887, 917, 947, 979], o),
    ...column(789, 832, [270, 302, 331, 360, 389, 416, 441], e), ...row(270, 309, [834, 863, 894, 924, 951, 979], e),
    ...column(834, 869, [311, 337, 363, 389, 415, 441], e), ...row(311, 350, [872, 896, 917, 938, 959, 979], e), ...column(872, 903, [352, 374, 397, 419, 441], e),
    ...row(352, 387, [905, 923, 941, 959, 979], e), ...column(905, 942, [389, 407, 425, 441], e), ...row(389, 423, [944, 960, 979], e), [944, 425, 977, 439, e]], '#f9dcb0', '#52300f', 13.5, 18);
  const g = '#bfe1d9';
  s += cells([[274, 499, 466, 781, '#325685', 'null sales enterpr', '#c8d5e5'], ...column(469, 615, [499, 600, 700, 783], '#8bbfcb', ['Cheese', 'Pepperoni', 'The Meats']), ...column(617, 759, [499, 586, 658, 723, 783], '#98cacd', ['Cheese XL', 'Pepperoni XL', 'Garden Fresh', 'The Works']),
    ...column(762, 834, [499, 609, 658, 705, 744, 783], ['#a2cdcf', '#b2d9d4', '#b5dbd5', '#b7dcd5', '#b8dcd5'], ['bev-20oz|btl all', 'Garden|Frsh XL', 'Icee 24oz', 'bev-Milk', 'Monster']),
    ...row(499, 605, [836, 887, 935, 979], '#afd7d5', ['The', '', 'The']), ...row(607, 669, [836, 875, 912, 947, 979], g), ...column(836, 891, [671, 701, 729, 759, 783], g), ...row(671, 717, [893, 922, 952, 979], g), ...column(893, 930, [719, 752, 783], g), ...row(719, 762, [932, 956, 979], g), [932, 764, 977, 781, g]], '#e2f1ef', '#2c444a', 13.5, 19);
  [[123, 'og', '213', '6,469', 36], [465, 'bg', '206', '12,207', 43]].forEach(([y, f, a, b, w]) => s += T(987, y, 12, 'Net Sales', 58, '#333') + R(990, y + 10, 126, 14, `url(#${f})`, 'stroke="#ccc"') + T(990, y + 37, 12, a, 24, '#666') + T(1116 - w, y + 37, 12, b, w, '#666'));
  s += R(30, 869, 1674, 28, '#e6e6e6') + R(582, 870, 114, 27, '#fff') + R(30, 897, 1674, 22, '#ececec') + R(30, 896, 1674, 1, '#ccc') + R(30, 918, 1674, 36, '#d6d6d6');
  [['⊟ Data Source', 38, 74], ['VijayRam - NetSales vs Store', 177, 140], ['Store Treemap', 335, 72], ['Coffee Store/Papa John', 420, 117], ['Pub', 555, 18], ['⊞ Pub Vs Papa John', 586, 104]].forEach(([t, x, w]) => s += T(x, 887, 10.5, t, w, '#444'));
  s += [705, 733, 761].map(x => sheetIcon(x, 878)).join('');
  s += [172, 330, 415, 548, 781].map(x => R(x, 870, 1, 26, '#ccc')).join('') + [1339, 1475, 1505, 1532, 1582].map(x => R(x, 897, 1, 21, '#d5d5d5')).join('') + T(1588, 911, 8, '◂ ◂ ▸ ▸', 48, '#999') + R(1650, 903, 11, 8, '#bbb') + R(1669, 903, 11, 8, '#bbb') + R(1688, 903, 10, 8, '#444');
  s += `<g transform="translate(-15 0) scale(1.125 1)">${taskbar(53, 936)}</g>` + T(1661, 931, 9, '20:45', 25, '#222') + T(1648, 947, 9, '26-04-2022', 51, '#222');
  return `<svg width="558" height="314" viewBox="945 374 558 314" style="overflow:hidden" font-family="Noto Sans">${defs}<g transform="translate(935 370) scale(.33333)">${s}</g></svg>`;
}

document.getElementById('left').innerHTML = titlebar(false) + ribbon(false) + hruler({ zero: 215.5, cm: 24.1, start: 154.5, right: 599.5, end: 660.5 }) +
  `<div class="body left-doc">${vruler({ zero: 88.6, cm: 24.1, from: 681, to: 743 })}<div class="gutter"></div><div class="canvas">
  <div class="page clipped first"><div class="line"><b>11.</b></div><div style="margin-top:3px;height:276px">${macShot()}</div><div class="line" style="margin-bottom:2px"><b>12.</b></div><div class="line">The Net Sales for T-Hot Mocha is <b>571</b></div><div class="footer">Page 4 of 5</div></div>
  <div class="page second"><div class="doc-head">Assignment 13 – Treemaps</div><div class="byline">Name: Praful Patil<br>NetID: pvp220001</div><div class="line"><b>13.</b></div></div></div></div>` +
  status({ w1: 87, w2: 72, w3: 101, words: '50 words', track: true, knob: 647, pct: '85%', zx: 0 });

document.getElementById('right').innerHTML = titlebar(true) + ribbon(true) + hruler({ zero: 136.5, cm: 34.07, start: 50.7, right: 678.3, end: 765 }) +
  `<div class="body right-doc">${vruler({ zero: -144.5, cm: 34.04, from: 692, to: 779 })}<div class="gutter"></div><div class="canvas">
  <div class="page clipped first">${pubStrip()}<div class="line" style="margin-top:12px"><b>12.</b></div><div class="line" style="margin-bottom:1px">The Net Sales for T-Hot Mocha is <b>571</b></div><div class="line" style="margin-bottom:12px"><b>13.</b></div>${dashShot()}</div>
  <div class="page second"></div></div></div>` +
  status({ w1: 86.5, w2: 108.5, w3: 117, words: '10 of 129 words', track: false, knob: 656, pct: '120%', zx: -2 });
```
